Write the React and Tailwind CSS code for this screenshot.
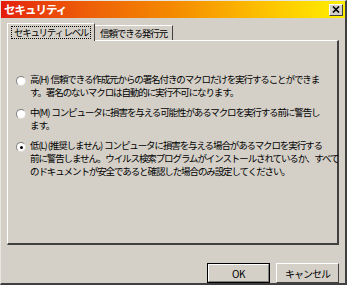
import React from "react";

const font = { fontFamily: '"Noto Sans CJK JP", "Noto Sans", sans-serif' };

function Radio({ checked }) {
  return (
    <div className="relative w-[10px] h-[10px] shrink-0 rounded-full bg-white border border-t-[#808080] border-l-[#808080] border-r-[#e0ddd6] border-b-[#e0ddd6] mt-[3px]">
      {checked && <div className="absolute left-[2.5px] top-[2.5px] w-[3px] h-[3px] rounded-full bg-black" />}
    </div>
  );
}

function Option({ checked, lines }) {
  return (
    <div className="flex gap-[4px] items-start">
      <Radio checked={checked} />
      <div className="flex flex-col text-[9.5px] leading-[13px] tracking-[-1.1px] text-black whitespace-pre">
        {lines.map((l, i) => (
          <span key={i}>{l}</span>
        ))}
      </div>
    </div>
  );
}

export default function App() {
  return (
    <div className="w-[347px] h-[285px] bg-[#d4d0c8] flex flex-col border-l border-t border-[#e8e6e0] border-r-2 border-b-2 border-r-[#404040] border-b-[#404040] overflow-hidden" style={font}>
      <div className="h-[17px] shrink-0 flex items-center justify-between pl-[3px] pr-[2px] bg-gradient-to-r from-[#e41a0c] via-[#f48a00] to-[#fff000]">
        <span className="text-white font-bold text-[11.5px] leading-none tracking-[-1px]">セキュリティ</span>
        <div className="w-[14px] h-[12px] bg-[#d4d0c8] border border-t-white border-l-white border-r-[#404040] border-b-[#404040] flex items-center justify-center">
          <svg width="8" height="7" viewBox="0 0 8 7">
            <path d="M1 0.5 L7 6.5 M7 0.5 L1 6.5" stroke="black" strokeWidth="1.6" />
          </svg>
        </div>
      </div>
      <div className="flex flex-col px-[6px] pt-[4px]">
        <div className="flex items-end h-[18px] relative z-10">
          <div className="h-[18px] px-[3px] flex items-center bg-[#d4d0c8] border-t border-l border-white border-r border-r-[#404040] -mb-[1px] pb-[1px]">
            <span className="text-[9.5px] leading-[11px] tracking-[-1.3px] border border-dotted border-black px-[2px] whitespace-pre">セキュリティ レベル</span>
          </div>
          <div className="h-[15px] px-[5px] flex items-center border-t border-r border-r-[#404040] border-t-white">
            <span className="text-[9.5px] leading-[11px] tracking-[-1.1px]">信頼できる発行元</span>
          </div>
        </div>
        <div className="h-[205px] border-t border-l border-white border-r-2 border-b-2 border-r-[#404040] border-b-[#404040] flex flex-col gap-[7px] pt-[32px] pl-[8px] pr-[8px]">
          <Option
            lines={[
              "高(H)  信頼できる作成元からの署名付きのマクロだけを実行することができま",
              "す。署名のないマクロは自動的に実行不可になります。",
            ]}
          />
          <Option
            lines={[
              "中(M)  コンピュータに損害を与える可能性があるマクロを実行する前に警告し",
              "ます。",
            ]}
          />
          <Option
            checked
            lines={[
              "低(L) (推奨しません)  コンピュータに損害を与える場合があるマクロを実行する",
              "前に警告しません。ウイルス検索プログラムがインストールされているか、すべて",
              "のドキュメントが安全であると確認した場合のみ設定してください。",
            ]}
          />
        </div>
      </div>
      <div className="flex justify-end gap-[6px] pr-[6px] pt-[18px]">
        <div className="w-[63px] h-[20px] border border-black flex">
          <div className="flex-1 flex items-center justify-center border border-t-white border-l-white border-r-[#808080] border-b-[#808080] text-[10px] tracking-[-0.5px]">OK</div>
        </div>
        <div className="w-[63px] h-[20px] flex items-center justify-center border border-t-white border-l-white border-r-[#404040] border-b-[#404040] text-[10px] tracking-[-1px]">キャンセル</div>
      </div>
    </div>
  );
}
